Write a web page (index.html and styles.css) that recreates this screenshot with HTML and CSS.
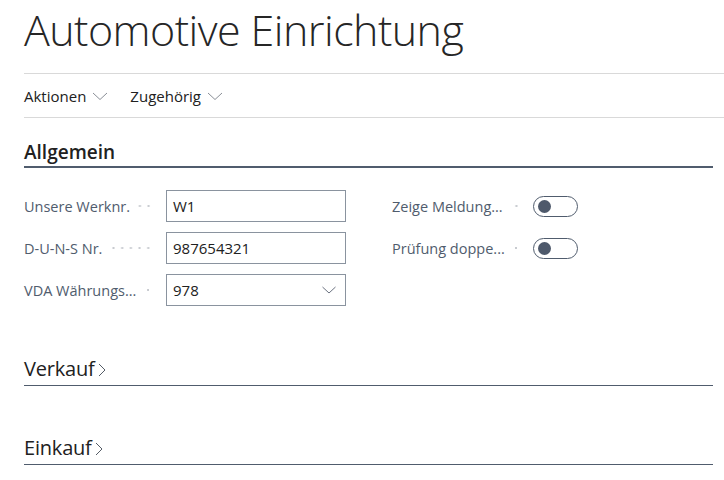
FILE: index.html
```html
<!DOCTYPE html>
<html lang="de">
<head>
<meta charset="utf-8">
<title>Automotive Einrichtung</title>
<link rel="stylesheet" href="styles.css">
</head>
<body>
<div class="page">
  <h1 class="title">Automotive Einrichtung</h1>
  <nav class="actionbar">
    <span class="action">Aktionen
      <svg class="chev-down" width="16" height="10" viewBox="0 0 16 10"><polyline points="1,2 8,8.5 15,2" fill="none" stroke="#8a8f97" stroke-width="1"/></svg>
    </span>
    <span class="action">Zugehörig
      <svg class="chev-down" width="16" height="10" viewBox="0 0 16 10"><polyline points="1,2 8,8.5 15,2" fill="none" stroke="#8a8f97" stroke-width="1"/></svg>
    </span>
  </nav>

  <section class="section open">
    <h2 class="section-head">Allgemein</h2>
    <div class="fields">
      <div class="col">
        <div class="field">
          <span class="label">Unsere Werknr.</span><span class="leader"></span>
          <div class="input">W1</div>
        </div>
        <div class="field">
          <span class="label">D-U-N-S Nr.</span><span class="leader"></span>
          <div class="input">987654321</div>
        </div>
        <div class="field">
          <span class="label">VDA Währungs...</span><span class="leader"></span>
          <div class="input select">978
            <svg class="sel-chev" width="14" height="8" viewBox="0 0 14 8"><polyline points="0.5,1 7,7 13.5,1" fill="none" stroke="#6b7280" stroke-width="1"/></svg>
          </div>
        </div>
      </div>
      <div class="col right">
        <div class="field">
          <span class="label">Zeige Meldung...</span><span class="leader"></span>
          <div class="toggle"><span class="knob"></span></div>
        </div>
        <div class="field">
          <span class="label">Prüfung doppe...</span><span class="leader"></span>
          <div class="toggle"><span class="knob"></span></div>
        </div>
      </div>
    </div>
  </section>

  <section class="section collapsed first">
    <h2 class="section-head"><span class="sec-title">Verkauf</span>
      <svg class="chev-right" width="8" height="14" viewBox="0 0 8 14"><polyline points="1,1 7,7 1,13" fill="none" stroke="#555c66" stroke-width="1"/></svg>
    </h2>
  </section>

  <section class="section collapsed">
    <h2 class="section-head"><span class="sec-title">Einkauf</span>
      <svg class="chev-right" width="8" height="14" viewBox="0 0 8 14"><polyline points="1,1 7,7 1,13" fill="none" stroke="#555c66" stroke-width="1"/></svg>
    </h2>
  </section>
</div>
</body>
</html>
```

FILE: styles.css
```css
* { box-sizing: border-box; }
html, body { margin: 0; padding: 0; background: #fff; }
body {
  font-family: "Open Sans", "Noto Sans", sans-serif;
  color: #212121;
  width: 724px;
  height: 480px;
  overflow: hidden;
}
.page { padding-left: 24px; }

.title {
  margin: 0;
  height: 73px;
  font-size: 43px;
  font-weight: 300;
  line-height: 60px;
  color: #262626;
  letter-spacing: -0.55px;
}

.actionbar {
  display: flex;
  align-items: center;
  gap: 22px;
  height: 45px;
  border-top: 1px solid #d9d9d9;
  border-bottom: 1px solid #d9d9d9;
  font-size: 15px;
}
.action { display: inline-flex; align-items: center; gap: 6px; }
.chev-down { display: block; margin-top: 1px; }

.section { margin-right: 11px; }
.section-head {
  margin: 0;
  display: flex;
  align-items: flex-end;
  font-weight: 600;
  font-size: 19px;
  line-height: 24px;
  color: #212121;
}
.open .section-head {
  height: 50px;
  padding-bottom: 2px;
  border-bottom: 2px solid #505c6d;
}

.fields {
  display: flex;
  gap: 46px;
  margin-top: 22px;
}
.col { display: flex; flex-direction: column; gap: 10px; }
.field {
  display: flex;
  align-items: center;
  width: 322px;
  height: 32px;
}
.col.right .field { width: 186px; }
.label {
  font-size: 14.5px;
  color: #505c6d;
  white-space: nowrap;
}
.leader {
  flex: 1;
  height: 4px;
  margin: 0 13px 0 8px;
  background-image: radial-gradient(circle, #c8cbd0 0.9px, transparent 1.3px);
  background-size: 8.7px 4px;
  background-position: right center;
  background-repeat: repeat-x;
}
.input {
  width: 180px;
  height: 32px;
  flex: none;
  border: 1px solid #8a939f;
  padding: 0 6px;
  font-size: 15px;
  line-height: 30px;
  color: #212121;
  display: flex;
  align-items: center;
}
.input.select { justify-content: space-between; padding-right: 9px; }
.sel-chev { display: block; }

.toggle {
  flex: none;
  width: 45px;
  height: 21px;
  border: 1px solid #505c6d;
  border-radius: 11px;
  display: flex;
  align-items: center;
  padding-left: 4px;
}
.knob {
  width: 13px;
  height: 13px;
  border-radius: 50%;
  background: #4e596b;
}

.collapsed .section-head {
  height: 30px;
  padding-bottom: 4px;
  border-bottom: 1px solid #505c6d;
  font-weight: 400;
  font-size: 20px;
  align-items: flex-end;
}
.collapsed { margin-top: 49px; }
.collapsed.first { margin-top: 50px; }
.sec-title { white-space: nowrap; letter-spacing: -0.2px; }
.chev-right { display: block; margin-bottom: 4px; margin-left: 3px; }
```
